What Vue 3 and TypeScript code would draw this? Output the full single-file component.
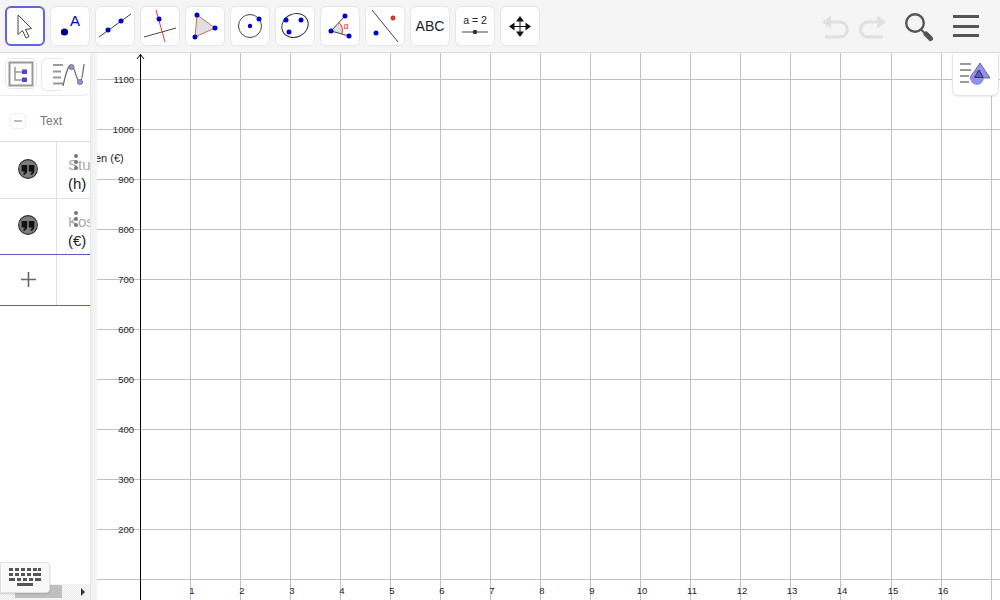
<script setup lang="ts">
const step = 50.07
const xs: { x: number; label: number }[] = []
for (let i = 1; i <= 17; i++) xs.push({ x: Math.floor(140 + step * i) + 0.5, label: i })
const ys: { y: number; label: number }[] = []
for (let i = 1; i <= 11; i++) ys.push({ y: 629.5 - 50 * i, label: i * 100 })
const rows = [
  { name: 'Stun', unit: '(h)' },
  { name: 'Kos', unit: '(€)' },
]
</script>

<template>
  <div class="app">
    <header class="toolbar">
      <button class="tool selected">
        <svg width="40" height="40" viewBox="0 0 40 40"><path d="M13 9 L13 28.5 L17.5 24.5 L21 32 L24 30.5 L20.5 23.5 L26.5 22.5 Z" fill="#fff" stroke="#444" stroke-width="1"/></svg>
      </button>
      <button class="tool">
        <svg width="40" height="40" viewBox="0 0 40 40"><circle cx="14.5" cy="26" r="3.6" fill="#00008c"/><text x="20" y="20" class="a">A</text></svg>
      </button>
      <button class="tool">
        <svg width="40" height="40" viewBox="0 0 40 40"><line x1="4" y1="31" x2="36" y2="8" stroke="#444"/><circle cx="13" cy="24" r="2.5" fill="#00c"/><circle cx="26" cy="15" r="2.5" fill="#00c"/></svg>
      </button>
      <button class="tool">
        <svg width="40" height="40" viewBox="0 0 40 40"><line x1="4" y1="31" x2="36" y2="22" stroke="#444"/><line x1="16" y1="4" x2="25" y2="36" stroke="#e33"/><circle cx="19" cy="13" r="2.5" fill="#00c"/></svg>
      </button>
      <button class="tool">
        <svg width="40" height="40" viewBox="0 0 40 40"><path d="M12 9 L30 22 L10 31 Z" fill="#e0e0e0" stroke="#c0705a" stroke-width="1"/><circle cx="12" cy="9" r="2.5" fill="#00c"/><circle cx="30" cy="22" r="2.5" fill="#00c"/><circle cx="10" cy="31" r="2.5" fill="#00c"/></svg>
      </button>
      <button class="tool">
        <svg width="40" height="40" viewBox="0 0 40 40"><circle cx="20" cy="20" r="11.5" fill="none" stroke="#444"/><circle cx="20" cy="20" r="2.2" fill="#00c"/><circle cx="29" cy="13" r="2.5" fill="#00c"/></svg>
      </button>
      <button class="tool">
        <svg width="40" height="40" viewBox="0 0 40 40"><ellipse cx="20" cy="19.5" rx="13.5" ry="11.5" fill="none" stroke="#333" transform="rotate(-25 20 19.5)"/><circle cx="11" cy="14" r="2.5" fill="#00c"/><circle cx="26" cy="14" r="2.5" fill="#00c"/><circle cx="14" cy="26" r="2.5" fill="#00c"/></svg>
      </button>
      <button class="tool">
        <svg width="40" height="40" viewBox="0 0 40 40"><path d="M11 25 L19 16.5 A12 12 0 0 1 22 28 Z" fill="#ddd"/><path d="M19 16.5 A12 12 0 0 1 22 28" fill="none" stroke="#e33"/><path d="M25 10 L11 25 L29 30" fill="none" stroke="#444"/><circle cx="25" cy="10" r="2.5" fill="#00c"/><circle cx="11" cy="25" r="2.5" fill="#00c"/><circle cx="29" cy="30" r="2.5" fill="#00c"/><text x="23.5" y="23" class="alpha">α</text></svg>
      </button>
      <button class="tool">
        <svg width="40" height="40" viewBox="0 0 40 40"><line x1="7" y1="4" x2="33" y2="36" stroke="#444"/><circle cx="28" cy="12" r="2.2" fill="#e33" stroke="#733" stroke-width=".6"/><circle cx="11" cy="27" r="2.5" fill="#00c"/></svg>
      </button>
      <button class="tool abc">ABC</button>
      <button class="tool">
        <svg width="40" height="40" viewBox="0 0 40 40"><text x="20" y="18" class="slider">a = 2</text><line x1="7" y1="26" x2="33" y2="26" stroke="#444"/><circle cx="20" cy="26" r="2.3" fill="#333"/></svg>
      </button>
      <button class="tool">
        <svg width="40" height="40" viewBox="0 0 40 40"><path d="M20 12 V29 M12 20.5 H28" stroke="#111" stroke-width="1"/><path d="M20 10 L24 15.5 H16 Z M20 31 L24 25.5 H16 Z M9 20.5 L14.5 16.5 V24.5 Z M31 20.5 L25.5 16.5 V24.5 Z" fill="#111"/></svg>
      </button>
      <div class="actions">
        <svg class="undo" width="28" height="26" viewBox="0 0 28 26"><path d="M0 7 L9 0.5 V13.5 Z" fill="#e0e0e0"/><path d="M7 7 H18 A7.5 7.5 0 0 1 18 22 H3" fill="none" stroke="#e0e0e0" stroke-width="3"/></svg>
        <svg class="redo" width="28" height="26" viewBox="0 0 28 26"><path d="M28 7 L19 0.5 V13.5 Z" fill="#e0e0e0"/><path d="M21 7 H10 A7.5 7.5 0 0 0 10 22 H25" fill="none" stroke="#e0e0e0" stroke-width="3"/></svg>
        <svg class="search" width="29" height="29" viewBox="0 0 29 29"><circle cx="10" cy="10" r="8.8" fill="none" stroke="#555" stroke-width="2.4"/><line x1="16" y1="16.5" x2="20" y2="20.5" stroke="#555" stroke-width="2"/><line x1="21" y1="21" x2="25.5" y2="25.5" stroke="#555" stroke-width="5" stroke-linecap="round"/></svg>
        <div class="menu"><i></i><i></i><i></i></div>
      </div>
    </header>

    <div class="body">
      <aside class="panel">
        <div class="tabs">
          <button class="tab">
            <svg width="26" height="26" viewBox="0 0 26 26"><rect x="1.5" y="1.5" width="23" height="23" fill="none" stroke="#999" stroke-width="2"/><path d="M7 6 V19 H14 M7 11 H14" fill="none" stroke="#999" stroke-width="1.5"/><rect x="14" y="8.5" width="5" height="4.5" fill="#4a4ad0"/><rect x="14" y="16.5" width="5" height="4.5" fill="#4a4ad0"/></svg>
          </button>
          <button class="tab second">
            <svg width="32" height="24" viewBox="0 0 32 24"><path d="M0 2 H10 M0 8.5 H8 M0 14.5 H8 M0 20.5 H10" stroke="#999" stroke-width="2"/><path d="M10 23 C13 10 15 2 18 2 C22 2 23 19 27 19 C29 19 30 9 31 1" fill="none" stroke="#666" stroke-width="1.2"/><circle cx="18.5" cy="4" r="2.6" fill="#8f92dc" stroke="#666" stroke-width=".7"/><circle cx="27" cy="19" r="2.6" fill="#8f92dc" stroke="#666" stroke-width=".7"/></svg>
          </button>
        </div>
        <div class="group"><span class="minus"><i></i></span><span class="group-label">Text</span></div>
        <div v-for="row in rows" :key="row.name" class="row">
          <div class="marble-cell">
            <svg class="marble" width="20" height="20" viewBox="0 0 20 20"><circle cx="10" cy="10" r="9.4" fill="#7d7d7d" stroke="#333" stroke-width="1.1"/><path d="M3.6 6 H9.2 V11.5 C9.2 14 7.6 15.6 5.6 16 L5.2 14.4 C6.2 14 6.6 13.2 6.6 12.4 H3.6 Z M10.8 6 H16.4 V11.5 C16.4 14 14.8 15.6 12.8 16 L12.4 14.4 C13.4 14 13.8 13.2 13.8 12.4 H10.8 Z" fill="#111"/></svg>
          </div>
          <div class="value">
            <span class="dots"><i></i><i></i><i></i></span>
            <span class="name">{{ row.name }}</span>
            <span class="unit">{{ row.unit }}</span>
          </div>
        </div>
        <div class="row add">
          <div class="marble-cell">
            <svg class="plus" width="15" height="15" viewBox="0 0 15 15"><path d="M7.5 0 V15 M0 7.5 H15" stroke="#666" stroke-width="1.6"/></svg>
          </div>
          <div class="value"></div>
        </div>
        <div class="scrollbar"><span class="thumb"></span><span class="arrow"></span></div>
        <button class="keyboard">
          <svg width="34" height="22" viewBox="0 0 34 22"><g fill="#555"><rect x="1" y="1" width="4" height="3"/><rect x="7" y="1" width="4" height="3"/><rect x="13" y="1" width="4" height="3"/><rect x="19" y="1" width="4" height="3"/><rect x="25" y="1" width="4" height="3"/><rect x="30" y="1" width="3" height="3"/><rect x="1" y="6" width="4" height="3"/><rect x="7" y="6" width="4" height="3"/><rect x="13" y="6" width="4" height="3"/><rect x="19" y="6" width="4" height="3"/><rect x="25" y="6" width="8" height="3"/><rect x="1" y="11" width="6" height="3"/><rect x="9" y="11" width="4" height="3"/><rect x="15" y="11" width="4" height="3"/><rect x="21" y="11" width="4" height="3"/><rect x="27" y="11" width="6" height="3"/><rect x="9" y="16" width="16" height="3"/></g></svg>
        </button>
      </aside>
      <div class="splitter"></div>
      <main class="canvas">
        <svg class="graph" width="903" height="547" viewBox="97 53 903 547">
          <g stroke="#c0c0c0" shape-rendering="crispEdges">
            <line v-for="t in xs" :key="t.label" :x1="t.x" y1="53" :x2="t.x" y2="600"/>
            <line v-for="t in ys" :key="t.label" x1="97" :y1="t.y" x2="1000" :y2="t.y"/>
          </g>
          <line x1="140.5" y1="54" x2="140.5" y2="600" stroke="#000" shape-rendering="crispEdges"/>
          <path d="M137 59 L140.5 54.5 L144 59" fill="none" stroke="#000"/>
          <g class="ticks">
            <text v-for="t in ys.slice(1)" :key="t.label" x="134" :y="t.y + 3.5" text-anchor="end">{{ t.label }}</text>
            <text v-for="t in xs.slice(0, 16)" :key="t.label" :x="t.x + 1.5" y="593.5" text-anchor="middle">{{ t.label }}</text>
          </g>
          <text class="ylabel" x="95" y="162">en (€)</text>
        </svg>
        <button class="style-bar">
          <svg width="32" height="24" viewBox="0 0 32 24"><path d="M0 2 H11 M0 8 H11 M0 14 H9 M0 20 H9" stroke="#999" stroke-width="2"/><path d="M20 1 L30 16 H10 Z" fill="#8f92ef" stroke="#555" stroke-width=".8"/><circle cx="17" cy="16" r="6.5" fill="#8f92ef" stroke="#667" stroke-width=".5"/><path d="M19 8 L23 15.5 H14.5 Z" fill="#5a5ad8" stroke="#223" stroke-width=".8"/></svg>
        </button>
      </main>
    </div>
  </div>
</template>

<style>
html, body { margin: 0; overflow: hidden; background: #fff; }
</style>

<style scoped>
.app {
  width: 1000px;
  height: 600px;
  display: flex;
  flex-direction: column;
  overflow: hidden;
  font-family: "Liberation Sans", Arial, sans-serif;
  color: #222;
}
button { padding: 0; font: inherit; background: #fff; cursor: pointer; }
.toolbar {
  flex: 0 0 53px;
  box-sizing: border-box;
  height: 53px;
  display: flex;
  align-items: flex-start;
  gap: 5px;
  padding: 6px 0 0 5px;
  background: #f5f5f5;
  border-bottom: 1px solid #dcdcdc;
}
.tool {
  box-sizing: border-box;
  width: 40px;
  height: 40px;
  position: relative;
  display: flex;
  align-items: center;
  justify-content: center;
  border: 1px solid #e6e6e6;
  border-radius: 6px;
}
.tool svg { position: absolute; left: -1px; top: -1px; }
.tool.selected { border: 2px solid #6363e8; }
.tool.selected svg { left: -2px; top: -2px; }
.a { font-size: 15px; fill: #00c; }
.alpha { font-size: 9px; fill: #e33; }
.slider { font-size: 10.5px; fill: #222; text-anchor: middle; }
.abc { font-size: 14px; color: #222; }
.actions {
  margin-left: auto;
  height: 40px;
  display: flex;
  align-items: center;
  padding-right: 21px;
}
.undo { margin-right: 8px; margin-top: 4px; }
.redo { margin-right: 19px; margin-top: 4px; }
.search { margin-right: 19px; margin-top: 2px; }
.menu { display: flex; flex-direction: column; gap: 6.5px; }
.menu i { display: block; width: 26px; height: 3px; background: #555; }
.body { flex: 1; display: flex; min-height: 0; }
.panel {
  flex: 0 0 90px;
  width: 90px;
  min-width: 0;
  position: relative;
  background: #fff;
}
.tabs {
  box-sizing: border-box;
  height: 43px;
  display: flex;
  gap: 4px;
  padding: 5px 0 0 5px;
  overflow: hidden;
  border-bottom: 1px solid #eaeaea;
  border-radius: 0 0 6px 0;
}
.tab {
  flex: 0 0 32px;
  width: 32px;
  height: 31px;
  display: flex;
  align-items: center;
  justify-content: center;
  border: 1px solid #e6e6e6;
  border-radius: 6px;
}
.tab.second {
  flex: 0 0 8px;
  width: 8px;
  justify-content: flex-start;
  padding-left: 11px;
  box-sizing: content-box;
  border-color: #e6e6e6 transparent #e6e6e6 #e6e6e6;
  border-radius: 6px 0 0 6px;
  background: none;
}
.tab.second svg { flex: 0 0 32px; }
.group {
  height: 46px;
  box-sizing: border-box;
  display: flex;
  align-items: center;
  padding: 5px 0 0 10px;
  border-bottom: 1px solid #dfdfdf;
}
.minus {
  box-sizing: border-box;
  width: 16px;
  height: 16px;
  display: flex;
  align-items: center;
  justify-content: center;
  border: 1px solid #eee;
  border-radius: 4px;
}
.minus i { width: 8px; height: 1.5px; background: #bbb; }
.group-label { margin-left: 14px; font-size: 12px; color: #777; }
.row {
  display: flex;
  height: 57px;
  box-sizing: border-box;
  border-bottom: 1px solid #dfdfdf;
}
.row:nth-of-type(4) { height: 56px; border-bottom-color: #5a5ac8; }
.row.add { height: 51px; border-bottom-color: #5a5ac8; }
.marble-cell {
  flex: 0 0 57px;
  box-sizing: border-box;
  display: flex;
  align-items: center;
  justify-content: center;
  border-right: 1px solid #dfdfdf;
}
.marble { margin-bottom: 3px; }
.plus { margin-bottom: 1px; }
.value {
  position: relative;
  flex: 1;
  min-width: 0;
  overflow: hidden;
  padding: 14px 0 0 11px;
  display: flex;
  flex-direction: column;
  white-space: nowrap;
}
.name { font-size: 15px; line-height: 17px; color: #aaa; }
.unit { font-size: 15px; line-height: 17px; margin-top: 2px; color: #222; }
.dots {
  position: absolute;
  left: 17px;
  top: 12px;
  display: flex;
  flex-direction: column;
  gap: 2px;
}
.dots i { width: 4px; height: 4px; border-radius: 50%; background: #777; }
.scrollbar {
  position: absolute;
  left: 0;
  right: 0;
  bottom: 0;
  height: 16px;
  background: repeating-conic-gradient(#ececec 0 25%, #f8f8f8 0 50%) 0 0 / 2px 2px;
}
.thumb { position: absolute; left: 15px; top: 1px; width: 47px; height: 13px; background: #c0c0c0; }
.arrow {
  position: absolute;
  right: 5px;
  top: 4px;
  width: 0;
  height: 0;
  border-left: 4px solid #333;
  border-top: 4px solid transparent;
  border-bottom: 4px solid transparent;
}
.keyboard {
  position: absolute;
  left: 0;
  top: 509px;
  box-sizing: border-box;
  width: 50px;
  height: 31px;
  display: flex;
  align-items: center;
  justify-content: center;
  background: #f8f8f8;
  border: 1px solid #e0e0e0;
  border-radius: 0 4px 4px 0;
  box-shadow: 0 1px 2px rgba(0, 0, 0, .15);
}
.splitter { flex: 0 0 7px; background: #f3f3f3; border-left: 1px solid #e4e4e4; box-sizing: border-box; }
.canvas { flex: 1; position: relative; min-width: 0; background: #fff; }
.graph { display: block; }
.ticks text { font-size: 9.5px; fill: #222; }
.ylabel { font-size: 11px; fill: #222; }
.style-bar {
  position: absolute;
  right: 1px;
  top: 0;
  box-sizing: border-box;
  width: 47px;
  height: 43px;
  display: flex;
  align-items: center;
  justify-content: center;
  border: 1px solid #e6e6e6;
  border-top: none;
  border-radius: 0 0 6px 6px;
  box-shadow: 0 1px 2px rgba(0, 0, 0, .08);
}
</style>
